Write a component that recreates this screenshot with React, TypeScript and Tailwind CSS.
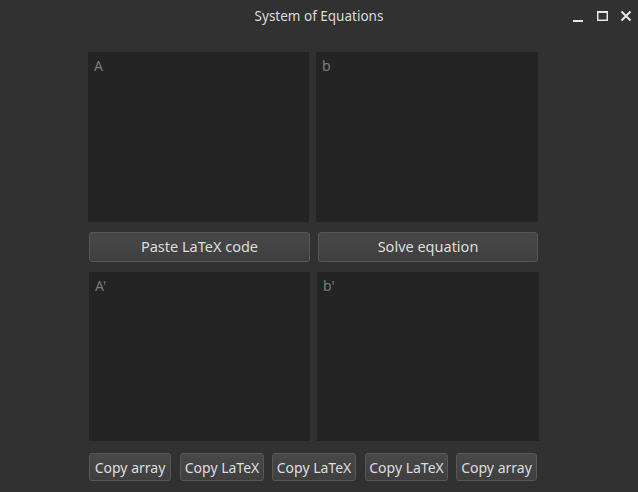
import React from 'react'

const font = {fontFamily: '"Noto Sans", "Open Sans", sans-serif'}

const Pane = ({label}: {label: string}) => (
    <div className="h-full bg-[#242424] px-[6px] py-[3px] text-[14px] text-[#7a7a7a]">
        {label}
    </div>
)

const Btn = ({children, className}: {children: React.ReactNode; className?: string}) => (
    <button
        className={
            'flex items-center justify-center rounded-[3px] border border-[#575757] bg-gradient-to-b from-[#484848] to-[#3f3f3f] text-[#dedede] ' +
            (className ?? '')
        }
    >
        {children}
    </button>
)

export default function App() {
    return (
        <div className="flex h-[492px] w-[638px] flex-col bg-[#313131]" style={font}>
            <div className="relative flex h-[32px] items-center justify-center text-[13.5px] text-[#dcdcdc]">
                System of Equations
                <div className="absolute right-[6px] top-[9px] flex items-center gap-[12px]">
                    <svg width="12" height="14" viewBox="0 0 12 14">
                        <rect x="1" y="11" width="10" height="2" fill="#e6e6e6" />
                    </svg>
                    <svg width="12" height="14" viewBox="0 0 12 14">
                        <rect x="1.75" y="2.75" width="9.5" height="8.5" fill="none" stroke="#e6e6e6" strokeWidth="1.5" />
                        <rect x="1" y="2" width="11" height="2" fill="#e6e6e6" />
                    </svg>
                    <svg width="12" height="14" viewBox="0 0 12 14">
                        <path d="M1.5 2.5 L10.5 11.5 M10.5 2.5 L1.5 11.5" stroke="#e6e6e6" strokeWidth="2" />
                    </svg>
                </div>
            </div>
            <div className="ml-[88px] mt-[20px] flex w-[451px] flex-col">
                <div className="grid h-[170px] grid-cols-[221px_222px] gap-[7px]">
                    <Pane label="A" />
                    <Pane label="b" />
                </div>
                <div className="mt-[10px] grid h-[30px] grid-cols-[221px_220px] gap-[8px] pl-[1px] text-[14.5px]">
                    <Btn>Paste LaTeX code</Btn>
                    <Btn>Solve equation</Btn>
                </div>
                <div className="mt-[10px] grid h-[169px] grid-cols-[221px_222px] gap-[7px] pl-[1px]">
                    <Pane label="A'" />
                    <Pane label="b'" />
                </div>
                <div className="mt-[12px] flex h-[28px] gap-[8px] pl-[1px] text-[14px]">
                    <Btn className="w-[82px]">Copy array</Btn>
                    <Btn className="ml-[1px] w-[84px]">Copy LaTeX</Btn>
                    <Btn className="w-[84px]">Copy LaTeX</Btn>
                    <Btn className="ml-[1px] w-[83px]">Copy LaTeX</Btn>
                    <Btn className="w-[81px]">Copy array</Btn>
                </div>
            </div>
        </div>
    )
}
